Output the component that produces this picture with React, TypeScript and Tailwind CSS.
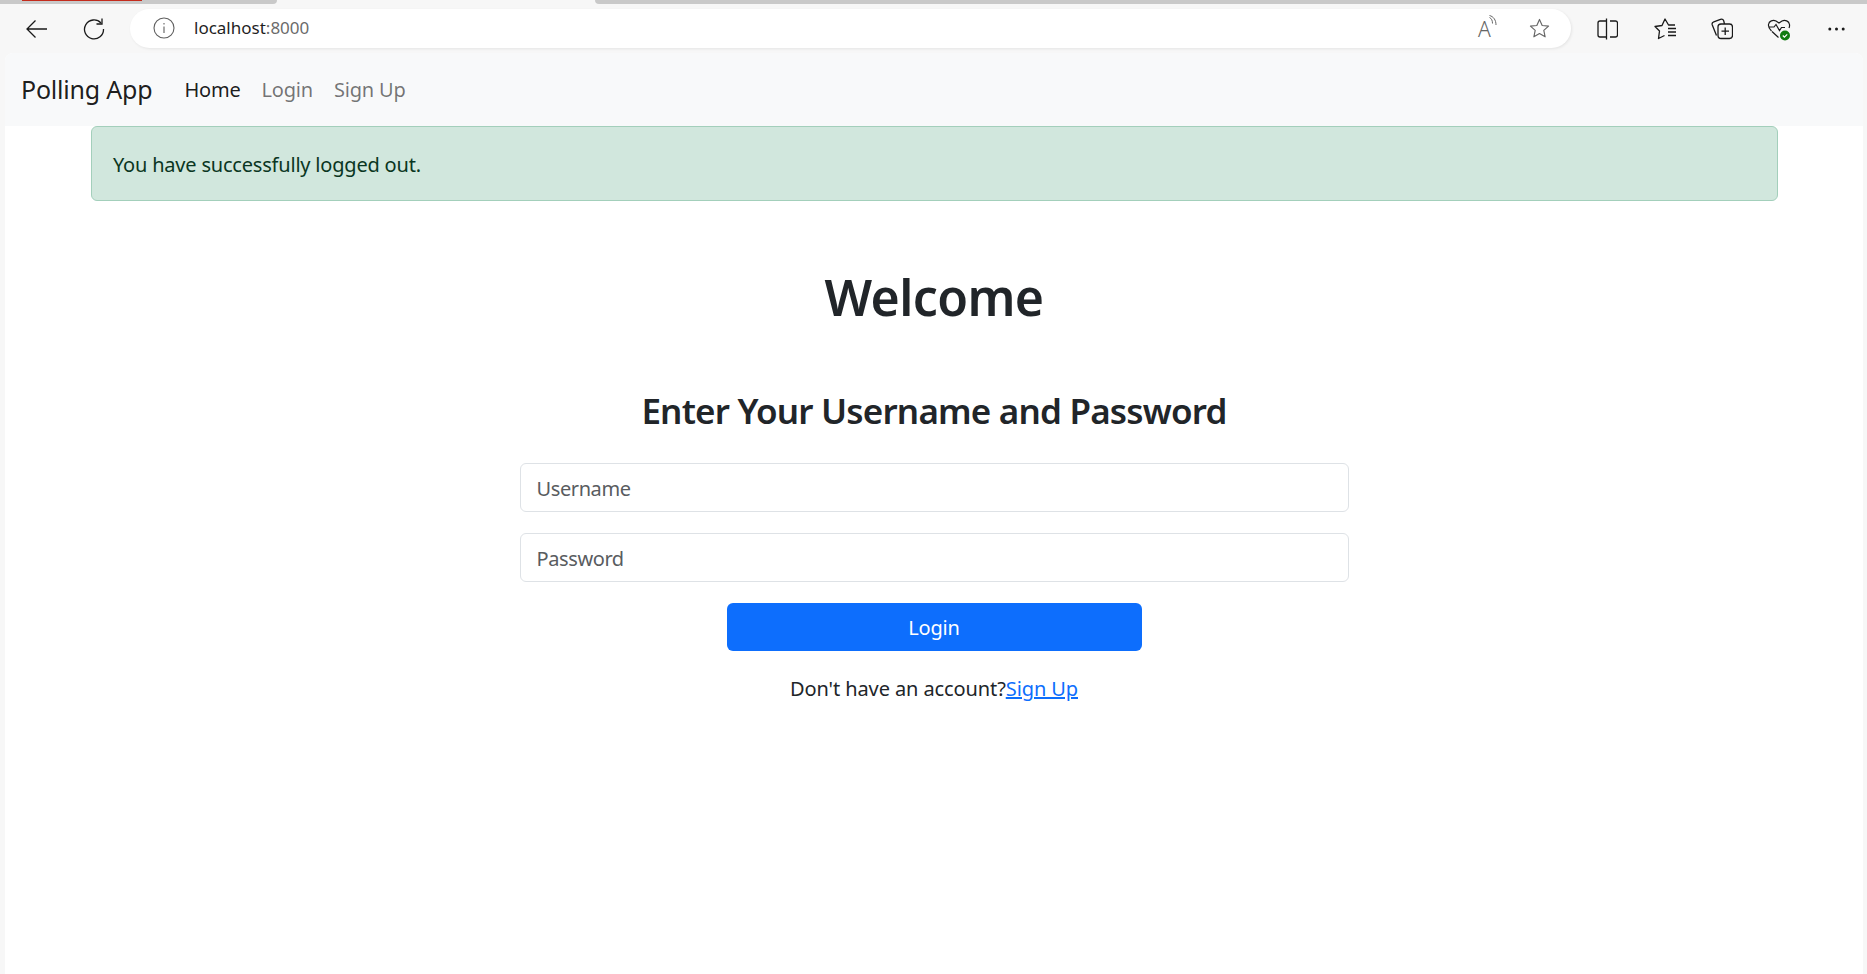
const font = { fontFamily: '"Noto Sans", sans-serif' };

function Toolbar() {
  return (
    <div className="h-[49px] flex items-center bg-[#f7f7f7]">
      <div className="w-[130px] shrink-0 flex items-center pl-[26px] gap-[36px]">
        <svg width="21" height="20" viewBox="0 0 21 20" fill="none" stroke="#1a1a1a" strokeWidth="1.3"><path d="M21 10H1.500M9.500 1.500L1 10l8.500 8.500" /></svg>
        <svg width="22" height="22" viewBox="0 0 22 22" fill="none" stroke="#1a1a1a" strokeWidth="1.3"><path d="M18 5A9.500 9.500 0 1 0 20.500 11" /><path d="M19 0.500V6h-5.500" /></svg>
      </div>
      <div className="w-[1441px] h-[39px] mt-[-1px] bg-white rounded-[20px] shadow-[1px_1px_3px_rgba(0,0,0,0.08)] flex items-center pl-[23px] pr-[21px]">
        <svg width="22" height="22" viewBox="0 0 22 22" fill="none" stroke="#5f5f5f" strokeWidth="1.1"><circle cx="11" cy="11" r="10" /><path d="M11 9.500v6.500M11 6v1.600" /></svg>
        <span className="ml-[19px] text-[17px] text-[#1f1f1f] tracking-[0px]">localhost<span className="text-[#6b6b6b]">:8000</span></span>
        <div className="ml-auto flex items-center gap-[31px]">
          <span className="relative w-[20px] h-[22px] ml-[2px] text-[21px] leading-[24px] text-[#666] font-light">A
            <svg className="absolute left-[10px] top-[-2px]" width="11" height="12" viewBox="0 0 11 12" fill="none" stroke="#666" strokeWidth="1"><path d="M1.500 2.500c2 1 3 3 3 6M1.500 0.500c4 1 6.500 4.500 6.500 9.500" /></svg>
          </span>
          <svg width="21" height="21" viewBox="0 0 22 22" fill="none" stroke="#666" strokeWidth="1.2" strokeLinejoin="round"><path d="M11 1.500l2.800 6.300 6.700.7-5 4.500 1.400 6.700L11 16.300l-5.900 3.400 1.400-6.700-5-4.500 6.700-.7z" /></svg>
        </div>
      </div>
      <div className="flex-1 flex items-center pl-[26px]">
        <svg className="mr-[36px]" width="21" height="22" viewBox="0 0 21 22" fill="none" stroke="#1a1a1a" strokeWidth="1.3"><path d="M9.500 3H3a2 2 0 0 0-2 2v12a2 2 0 0 0 2 2h6.500M9.500 0.500v21M13 3h5.500a2 2 0 0 1 2 2v12a2 2 0 0 1-2 2H13" /></svg>
        <svg className="mr-[34px]" width="23" height="22" viewBox="0 0 23 22" fill="none" stroke="#1a1a1a" strokeWidth="1.3" strokeLinejoin="round"><path d="M21 7H14.500L11 1L8 7.500L1 8.500L5.500 13L4.500 20.500L10.500 17.500M14 10.500h8M14 14h8M14 17.500h8" /></svg>
        <svg className="mr-[34px]" width="22" height="22" viewBox="0 0 22 22" fill="none" stroke="#1a1a1a" strokeWidth="1.3"><path d="M5.500 17.500L1.300 7a2.500 2.500 0 0 1 1.500-3.200L9.500 1.300a2.500 2.500 0 0 1 3.200 1.500L13.500 6" /><rect x="7" y="6" width="14.500" height="14.500" rx="3" /><path d="M14.200 9.500v7.500M10.500 13.200h7.500" /></svg>
        <svg className="mr-[37px]" width="24" height="24" viewBox="0 0 24 24" fill="none"><path d="M4.500 14C2 11.500 1.200 9.500 1.500 7.500C2 4 6 2.500 9 4L12 6L15 4C18 2.500 22 4 22.500 7.500C22.700 9 22.500 10 22 11M5 14.500L11.500 20.500M1.500 10H7L9 7.500L12.500 13.500L14.500 10.500H18" stroke="#1a1a1a" strokeWidth="1.2" /><circle cx="18" cy="18.500" r="5" fill="#107c10" /><path d="M15.800 18.500l1.600 1.600 2.800-2.800" stroke="#fff" strokeWidth="1.200" /></svg>
        <svg width="17" height="4" viewBox="0 0 17 4" fill="#1a1a1a"><circle cx="1.800" cy="2" r="1.500" /><circle cx="8.500" cy="2" r="1.500" /><circle cx="15.200" cy="2" r="1.500" /></svg>
      </div>
    </div>
  );
}

export default function App() {
  return (
    <div className="h-[974px] overflow-hidden bg-[#f7f7f7] flex flex-col" style={font}>
      <div className="h-[4px] flex justify-between bg-[#f7f7f7]">
        <div className="w-[277px] bg-[#c9c9c9] rounded-br-[6px] pl-[22px]"><div className="w-[120px] h-[1px] bg-[#c42b1c]" /></div>
        <div className="w-[1272px] bg-[#c9c9c9] rounded-bl-[6px]" />
      </div>
      <Toolbar />
      <div className="flex-1 ml-[5px] mr-[4px] bg-white rounded-t-[8px] overflow-hidden">
        <nav className="h-[73px] bg-[#f8f9fa] flex items-center pl-[16px] pt-[1px]">
          <span className="text-[25px] text-[#000000e6] tracking-[-0.2px]">Polling App</span>
          <span className="ml-[32px] text-[20px] text-[#000000e6] tracking-[-0.2px]">Home</span>
          <span className="ml-[21px] text-[20px] text-[#0000008c] tracking-[-0.2px]">Login</span>
          <span className="ml-[21px] text-[20px] text-[#0000008c] tracking-[-0.2px]">Sign Up</span>
        </nav>
        <div className="ml-[86px] mr-[85px] h-[75px] bg-[#d1e7dd] border border-[#a3cfbb] rounded-[6px] flex items-center px-[21px] pt-[2px] text-[20px] text-[#0a3622] tracking-[-0.2px]">
          You have successfully logged out.
        </div>
        <h1 className="mt-[62px] text-center text-[50px] leading-[68px] font-semibold text-[#212529] tracking-[-0.6px]">Welcome</h1>
        <h2 className="mt-[56px] text-center text-[35px] leading-[48px] font-semibold text-[#212529] tracking-[-0.8px]">Enter Your Username and Password</h2>
        <div className="mt-[28px] w-[829px] mx-auto flex flex-col items-center">
          <input placeholder="Username" className="w-full h-[49px] px-[16px] pt-[1px] text-[20px] tracking-[-0.4px] border border-[#dee2e6] rounded-[6px] placeholder:text-[#595c5f] outline-none" />
          <input placeholder="Password" className="mt-[21px] w-full h-[49px] px-[16px] pt-[1px] text-[20px] tracking-[-0.4px] border border-[#dee2e6] rounded-[6px] placeholder:text-[#595c5f] outline-none" />
          <button className="mt-[21px] w-[415px] h-[48px] pt-[1px] bg-[#0d6efd] text-white text-[20px] tracking-[-0.2px] rounded-[6px]">Login</button>
          <p className="mt-[23px] text-[20px] leading-[30px] text-[#212529] tracking-[-0.1px]">Don't have an account?<a className="text-[#0d6efd] underline">Sign Up</a></p>
        </div>
      </div>
    </div>
  );
}
